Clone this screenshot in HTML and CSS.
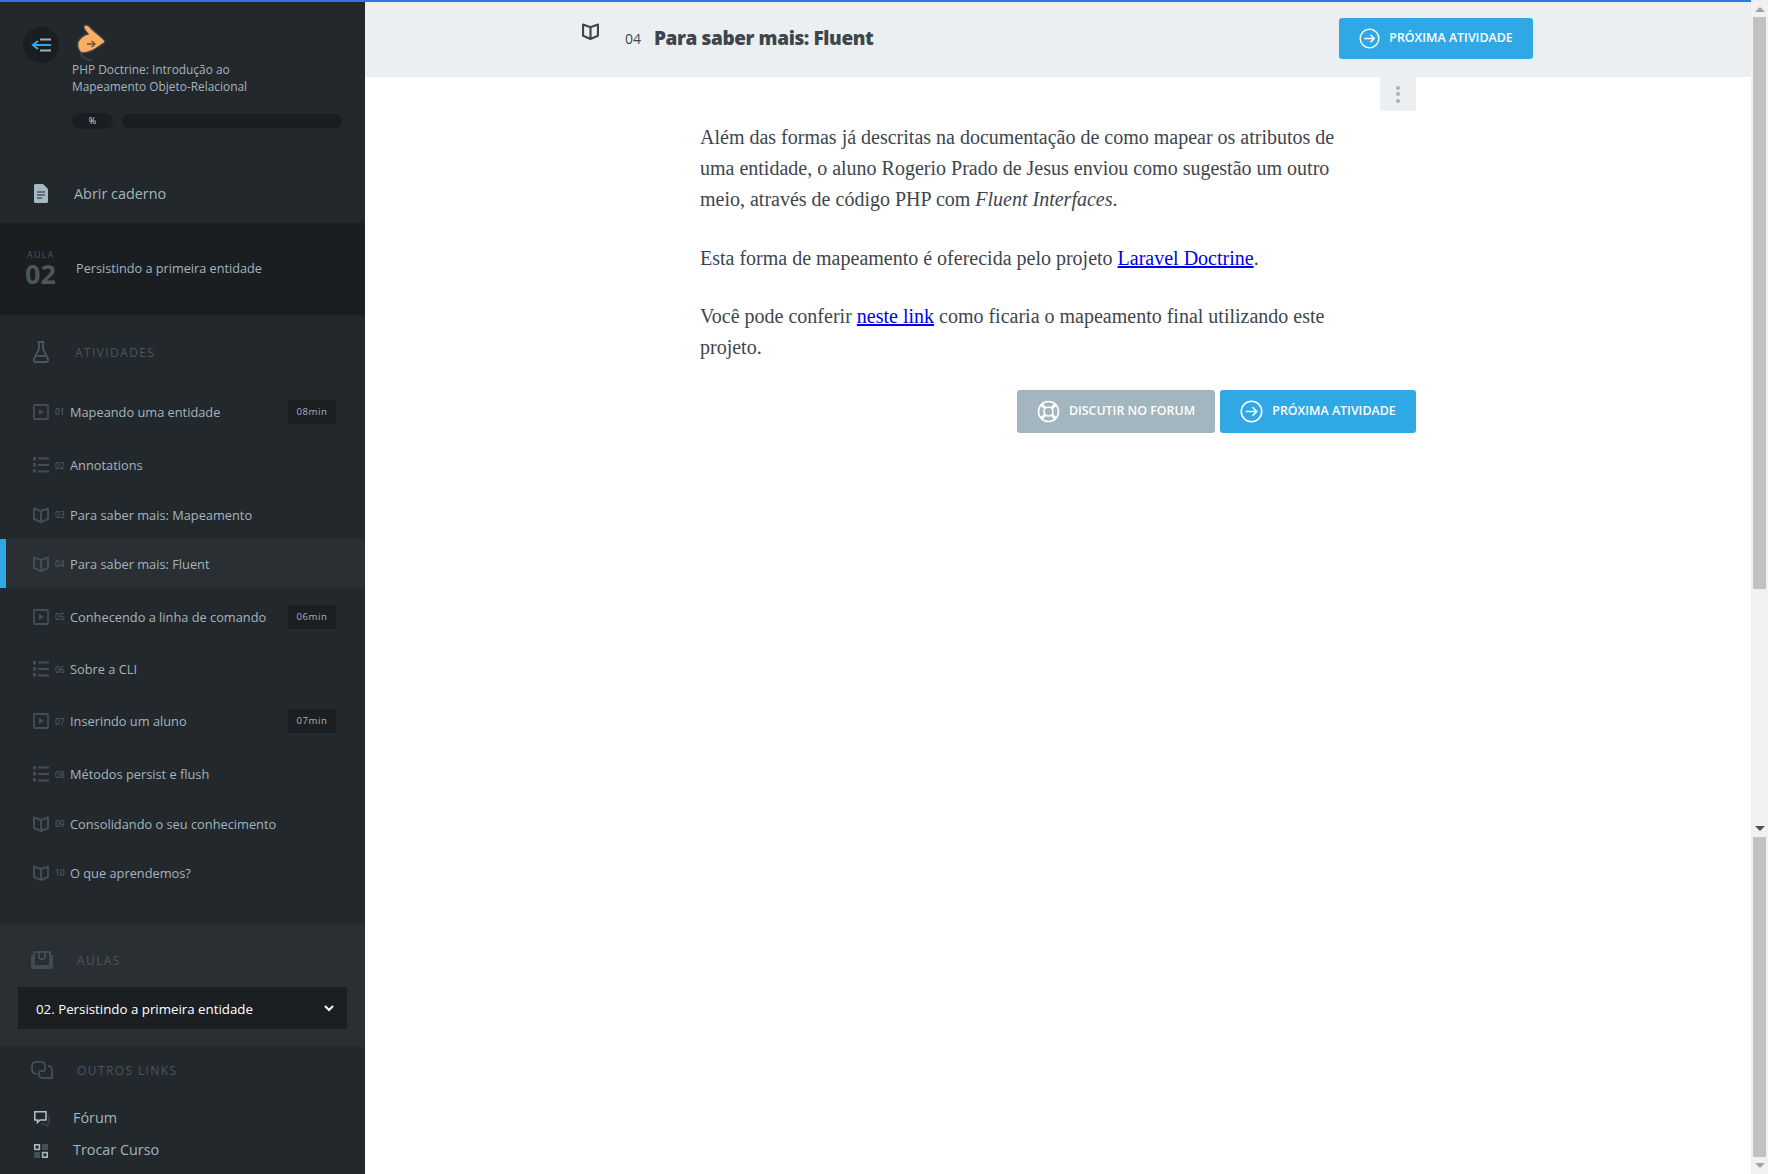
FILE: index.html
```html
<!DOCTYPE html>
<html lang="pt-BR">
<head>
    <meta charset="UTF-8">
    <title>Para saber mais: Fluent | PHP Doctrine</title>
    <link rel="stylesheet" href="styles.css">
</head>
<body>
    <svg class="icon-defs" width="0" height="0">
        <symbol id="i-book" viewBox="0 0 16 16">
            <path d="M1 1.5 L8 4 L15 1.5 V12 L8 15 L1 12 Z M8 4 V15" fill="none" stroke="currentColor" stroke-width="2" stroke-linejoin="round"/>
        </symbol>
        <symbol id="i-play" viewBox="0 0 16 16">
            <rect x="1" y="1" width="14" height="14" rx="1" fill="none" stroke="currentColor" stroke-width="1.8"/>
            <path d="M6 5 L11 8 L6 11 Z" fill="currentColor"/>
        </symbol>
        <symbol id="i-list" viewBox="0 0 16 16">
            <path d="M0 0 H3 V3.5 H0 Z M0 6 H3 V9.5 H0 Z M0 12 H3 V15.5 H0 Z" fill="currentColor"/>
            <path d="M5 1.5 H16 M5 8 H16 M5 14.5 H16" stroke="currentColor" stroke-width="2"/>
        </symbol>
        <symbol id="i-next" viewBox="0 0 22 22">
            <circle cx="11" cy="11" r="9.8" fill="none" stroke="currentColor" stroke-width="1.5"/>
            <path d="M5.5 11 H16 M12 7 L16 11 L12 15" fill="none" stroke="currentColor" stroke-width="1.5"/>
        </symbol>
    </svg>

    <div class="page">
        <div class="top-line"></div>
        <div class="layout">
            <aside class="sidebar">
                <div class="course">
                    <div class="back">
                        <svg width="20" height="14" viewBox="0 0 20 14">
                            <path d="M9 1.5 H20 M9 12.5 H20" stroke="#a5adb2" stroke-width="2"/>
                            <path d="M20 7 H3 M7 3 L2 7 L7 11" fill="none" stroke="#2fa8e6" stroke-width="2.2"/>
                        </svg>
                    </div>
                    <div class="course-info">
                        <svg class="course-logo" width="30" height="37" viewBox="0 0 30 37">
                            <path d="M3 29 C6 34 10 36 15 36" fill="none" stroke="#3a4045" stroke-width="1.6"/>
                            <path d="M7 2 C9 0 11 1 13 3 C17 8 24 12 28 17 C28 19 26 20 24 21 C18 25 13 29 5 29 C2 28 0 23 1 18 C3 14 7 11 11 10 C9 7 6 5 7 2 Z" fill="#fbae62" stroke="#3f454a" stroke-width="1.4"/>
                            <path d="M10 20 H18 M14.5 17 L18 20 L14.5 23" fill="none" stroke="#6a5640" stroke-width="1.5"/>
                        </svg>
                        <p class="course-name">PHP Doctrine: Introdução ao Mapeamento Objeto-Relacional</p>
                        <div class="progress">
                            <span class="progress-label">%</span>
                            <span class="progress-bar"></span>
                        </div>
                    </div>
                </div>

                <a class="notebook" href="#">
                    <svg width="14" height="19" viewBox="0 0 14 19">
                        <path d="M1 0 H9 L14 5 V18 L13 19 H1 L0 18 V1 Z" fill="#a6b8c1"/>
                        <path d="M3 8 H11 M3 11 H11 M3 14 H8" stroke="#23282c" stroke-width="1.1"/>
                    </svg>
                    <span>Abrir caderno</span>
                </a>

                <div class="lesson">
                    <div class="lesson-number">
                        <span class="lesson-tag">AULA</span>
                        <strong>02</strong>
                    </div>
                    <span class="lesson-name">Persistindo a primeira entidade</span>
                </div>

                <section class="activities">
                    <h3 class="side-title title-activities">
                        <svg width="16" height="22" viewBox="0 0 16 22">
                            <path d="M4.5 1 H11.5 M6 1 V8 L1 18 Q0.5 21 3 21 H13 Q15.5 21 15 18 L10 8 V1 M4 15 H12" fill="none" stroke="currentColor" stroke-width="1.9"/>
                        </svg>
                        <span>ATIVIDADES</span>
                    </h3>

                    <a class="task task-video" href="#">
                        <svg width="16" height="16"><use href="#i-play"/></svg>
                        <span class="task-num">01</span>
                        <span class="task-name">Mapeando uma entidade</span>
                        <span class="task-time">08min</span>
                    </a>
                    <a class="task task-list" href="#">
                        <svg width="16" height="16"><use href="#i-list"/></svg>
                        <span class="task-num">02</span>
                        <span class="task-name">Annotations</span>
                    </a>
                    <a class="task" href="#">
                        <svg width="16" height="16"><use href="#i-book"/></svg>
                        <span class="task-num">03</span>
                        <span class="task-name">Para saber mais: Mapeamento</span>
                    </a>
                    <a class="task active" href="#">
                        <svg width="16" height="16"><use href="#i-book"/></svg>
                        <span class="task-num">04</span>
                        <span class="task-name">Para saber mais: Fluent</span>
                    </a>
                    <a class="task task-video" href="#">
                        <svg width="16" height="16"><use href="#i-play"/></svg>
                        <span class="task-num">05</span>
                        <span class="task-name">Conhecendo a linha de comando</span>
                        <span class="task-time">06min</span>
                    </a>
                    <a class="task task-list tight" href="#">
                        <svg width="16" height="16"><use href="#i-list"/></svg>
                        <span class="task-num">06</span>
                        <span class="task-name">Sobre a CLI</span>
                    </a>
                    <a class="task task-video tight" href="#">
                        <svg width="16" height="16"><use href="#i-play"/></svg>
                        <span class="task-num">07</span>
                        <span class="task-name">Inserindo um aluno</span>
                        <span class="task-time">07min</span>
                    </a>
                    <a class="task task-list" href="#">
                        <svg width="16" height="16"><use href="#i-list"/></svg>
                        <span class="task-num">08</span>
                        <span class="task-name">Métodos persist e flush</span>
                    </a>
                    <a class="task" href="#">
                        <svg width="16" height="16"><use href="#i-book"/></svg>
                        <span class="task-num">09</span>
                        <span class="task-name">Consolidando o seu conhecimento</span>
                    </a>
                    <a class="task" href="#">
                        <svg width="16" height="16"><use href="#i-book"/></svg>
                        <span class="task-num">10</span>
                        <span class="task-name">O que aprendemos?</span>
                    </a>
                </section>

                <section class="lessons">
                    <h3 class="side-title">
                        <svg width="22" height="18" viewBox="0 0 22 18">
                            <path d="M3 1 H19 V15 H12 L11 16 L10 15 H3 Z M8 1 V7 Q11 10 14 7 V1 M1 4 V17 H21 V4" fill="none" stroke="currentColor" stroke-width="1.5"/>
                        </svg>
                        <span>AULAS</span>
                    </h3>
                    <div class="lesson-select">
                        <span>02. Persistindo a primeira entidade</span>
                        <svg width="10" height="7" viewBox="0 0 10 7">
                            <path d="M1 1 L5 5 L9 1" fill="none" stroke="#fff" stroke-width="2"/>
                        </svg>
                    </div>
                </section>

                <section class="links">
                    <h3 class="side-title">
                        <svg width="22" height="18" viewBox="0 0 22 18">
                            <path d="M6 13 Q1 13 1 8 V5 Q1 1 5 1 H10 Q14 1 14 5 V8 Q14 10 12 10 H10 Q8 10 8 12 V13 Q8 17 12 17 H21 V10 Q21 5 17 5" fill="none" stroke="currentColor" stroke-width="1.6"/>
                        </svg>
                        <span>OUTROS LINKS</span>
                    </h3>
                    <a class="side-link link-forum" href="#">
                        <svg width="16" height="16" viewBox="0 0 16 16">
                            <path d="M5 5 H15 V13 H13 V15.5 L10.5 13 H7" fill="none" stroke="#454f56" stroke-width="1"/>
                            <path d="M0.8 0.8 H12 V9 H6 L3.5 11.5 V9 H0.8 Z" fill="#23282c" stroke="#b3c3cb" stroke-width="1.5"/>
                        </svg>
                        <span>Fórum</span>
                    </a>
                    <a class="side-link" href="#">
                        <svg width="14" height="14" viewBox="0 0 14 14">
                            <rect x="0.8" y="0.8" width="4.6" height="4.6" fill="none" stroke="#a6b8c1" stroke-width="1.6"/>
                            <rect x="8.6" y="8.6" width="4.6" height="4.6" fill="none" stroke="#a6b8c1" stroke-width="1.6"/>
                            <rect x="8" y="0" width="6" height="6" fill="#454f56"/>
                            <rect x="0" y="8" width="6" height="6" fill="#454f56"/>
                        </svg>
                        <span>Trocar Curso</span>
                    </a>
                </section>
            </aside>

            <main class="main">
                <header class="task-header">
                    <svg class="header-book" width="17" height="17"><use href="#i-book"/></svg>
                    <span class="header-num">04</span>
                    <h1>Para saber mais: Fluent</h1>
                    <a class="btn btn-blue btn-header" href="#">
                        <svg width="21" height="21"><use href="#i-next"/></svg>
                        <span>PRÓXIMA ATIVIDADE</span>
                    </a>
                </header>

                <div class="content">
                    <div class="options-row">
                        <div class="options-tab"><i></i><i></i><i></i></div>
                    </div>
                    <div class="text">
                        <p>Além das formas já descritas na documentação de como mapear os atributos de uma entidade, o aluno Rogerio Prado de Jesus enviou como sugestão um outro meio, através de código PHP com <em>Fluent Interfaces</em>.</p>
                        <p>Esta forma de mapeamento é oferecida pelo projeto <a href="#">Laravel Doctrine</a>.</p>
                        <p>Você pode conferir <a href="#">neste link</a> como ficaria o mapeamento final utilizando este projeto.</p>
                    </div>
                    <div class="actions">
                        <a class="btn btn-grey" href="#">
                            <svg width="23" height="23" viewBox="0 0 23 23">
                                <circle cx="11.5" cy="11.5" r="10" fill="none" stroke="currentColor" stroke-width="1.6"/>
                                <circle cx="11.5" cy="11.5" r="4.5" fill="none" stroke="currentColor" stroke-width="1.6"/>
                                <path d="M4.5 4.5 L8.3 8.3 M18.5 4.5 L14.7 8.3 M4.5 18.5 L8.3 14.7 M18.5 18.5 L14.7 14.7" stroke="currentColor" stroke-width="3"/>
                            </svg>
                            <span>DISCUTIR NO FORUM</span>
                        </a>
                        <a class="btn btn-blue" href="#">
                            <svg width="23" height="23"><use href="#i-next"/></svg>
                            <span>PRÓXIMA ATIVIDADE</span>
                        </a>
                    </div>
                </div>
            </main>
        </div>
    </div>

    <div class="scrollbar">
        <span class="arrow-up"></span>
        <span class="thumb thumb-top"></span>
        <span class="track-gap"></span>
        <span class="arrow-down dark"></span>
        <span class="thumb thumb-bottom"></span>
        <span class="arrow-down"></span>
    </div>
</body>
</html>
```

FILE: styles.css
```css
:root {
    --side-bg: #23282c;
    --side-dark: #1a1e21;
    --side-text: #a3b5be;
    --side-muted: #4b565d;
    --blue: #31a8e6;
}

* {
    box-sizing: border-box;
    margin: 0;
    padding: 0;
}

html, body {
    height: 100%;
    overflow: hidden;
}

body {
    display: flex;
    font-family: "Open Sans", Arial, sans-serif;
    background: #fff;
}

a {
    text-decoration: none;
}

.icon-defs {
    position: absolute;
}

.page {
    flex: 1;
    min-width: 0;
    display: flex;
    flex-direction: column;
}

.top-line {
    height: 2px;
    background: #2a7ae2;
}

.layout {
    flex: 1;
    display: flex;
    min-height: 0;
}

/* sidebar */
.sidebar {
    width: 365px;
    flex-shrink: 0;
    background: var(--side-bg);
    color: var(--side-text);
    overflow: hidden;
}

.course {
    height: 163px;
    display: flex;
    padding: 22px 23px 0 23px;
}

.back {
    width: 36px;
    height: 36px;
    margin-top: 3px;
    border-radius: 50%;
    background: var(--side-dark);
    display: flex;
    align-items: center;
    justify-content: center;
    flex-shrink: 0;
}

.course-info {
    margin-left: 13px;
    flex: 1;
}

.course-logo {
    display: block;
    margin-left: 5px;
}

.course-name {
    font-size: 11.9px;
    line-height: 17px;
    width: 200px;
}

.progress {
    display: flex;
    align-items: center;
    gap: 9px;
    margin-top: 18px;
}

.progress-label {
    width: 41px;
    height: 16px;
    border-radius: 8px;
    background: var(--side-dark);
    color: #d5dde1;
    font-size: 9px;
    line-height: 16px;
    text-align: center;
}

.progress-bar {
    width: 220px;
    height: 14px;
    border-radius: 7px;
    background: var(--side-dark);
}

.notebook {
    height: 58px;
    padding: 0 0 2px 34px;
    display: flex;
    align-items: center;
    gap: 26px;
    color: var(--side-text);
    font-size: 14.4px;
}

.lesson {
    height: 92px;
    background: var(--side-dark);
    display: flex;
    align-items: center;
    padding-left: 25px;
}

.lesson-number {
    width: 51px;
    margin-top: -2px;
    display: flex;
    flex-direction: column;
    align-items: flex-start;
    color: var(--side-muted);
}

.lesson-tag {
    font-size: 9px;
    line-height: 10px;
    letter-spacing: 1.2px;
    margin-left: 2px;
}

.lesson-number strong {
    font-size: 27px;
    line-height: 27px;
    font-weight: 700;
}

.lesson-name {
    font-size: 12.7px;
    margin-top: -2px;
}

.side-title {
    display: flex;
    align-items: center;
    font-size: 12px;
    font-weight: 400;
    letter-spacing: 1.4px;
    color: var(--side-muted);
}

.activities {
    padding-bottom: 27px;
}

.title-activities {
    height: 68px;
    padding: 6px 0 0 33px;
    gap: 26px;
}

.task {
    height: 49px;
    display: flex;
    align-items: center;
    padding: 0 29px 0 33px;
    color: var(--side-text);
    font-size: 12.8px;
}

.task svg {
    color: #434d54;
    flex-shrink: 0;
}

.task-video {
    height: 57px;
}

.task-list {
    height: 50px;
}

/* rows 06 and 07 sit a little closer in the reference */
.task-video.tight {
    height: 56px;
}

.task-list.tight {
    height: 48px;
}

.task.active {
    background: #2a2f33;
    box-shadow: inset 6px 0 0 var(--blue);
}

.task-num {
    width: 15px;
    margin: 0 0 0 6px;
    font-size: 8.5px;
    color: #5a656c;
}

.task-name {
    flex: 1;
    white-space: nowrap;
}

.task-time {
    width: 48px;
    height: 24px;
    border-radius: 2px;
    background: #1b1f22;
    color: var(--side-text);
    font-size: 9.6px;
    line-height: 24px;
    letter-spacing: 0.6px;
    text-align: center;
}

.lessons {
    height: 123px;
    background: #2a2f33;
    padding: 26px 18px 0;
}

.lessons .side-title {
    height: 20px;
    padding-left: 13px;
    gap: 24px;
}

.lesson-select {
    height: 42px;
    margin-top: 17px;
    padding: 1px 13px 0 18px;
    background: #1b1f22;
    color: #fff;
    font-size: 13.3px;
    display: flex;
    align-items: center;
    justify-content: space-between;
}

.links {
    padding: 13px 31px 0;
}

.links .side-title {
    height: 20px;
    gap: 24px;
}

.side-link {
    display: flex;
    align-items: center;
    gap: 25px;
    height: 32px;
    padding-left: 3px;
    color: var(--side-text);
    font-size: 14.4px;
}

.side-link svg {
    margin-top: 4px;
}

.link-forum {
    margin-top: 21px;
    gap: 23px;
}

/* main area */
.main {
    flex: 1;
    min-width: 0;
}

.task-header {
    height: 75px;
    background: #eceff1;
    display: flex;
    align-items: center;
    padding: 0 218px 2px 217px;
    color: #3d464d;
}

.header-book {
    margin-top: -14px;
}

.header-num {
    margin-left: 26px;
    font-size: 14px;
}

.task-header h1 {
    flex: 1;
    margin: -2px 0 0 13px;
    font-size: 19px;
    font-weight: 800;
    letter-spacing: -0.4px;
    white-space: nowrap;
}

.btn {
    display: flex;
    align-items: center;
    justify-content: center;
    gap: 9px;
    height: 43px;
    border-radius: 3px;
    color: #fff;
    font-size: 12.4px;
    font-weight: 600;
}

.btn span {
    margin-top: -2px;
}

.btn-blue {
    background: var(--blue);
    width: 196px;
}

.btn-grey {
    background: #a3b5be;
    width: 198px;
}

.btn-header {
    width: 194px;
    height: 41px;
}

.content {
    width: 716px;
    margin-left: 335px;
}

.options-row {
    display: flex;
    justify-content: flex-end;
    height: 34px;
}

.options-tab {
    width: 36px;
    background: #eceff1;
    border-radius: 0 0 3px 3px;
    display: flex;
    flex-direction: column;
    align-items: center;
    justify-content: center;
    gap: 2.5px;
}

.options-tab i {
    width: 4px;
    height: 4px;
    border-radius: 50%;
    background: #a3b5be;
}

.text {
    width: 640px;
    margin-top: 11px;
    font-family: "Liberation Serif", "Times New Roman", serif;
    font-size: 20px;
    line-height: 31px;
    color: #3d464d;
}

.text p {
    margin-bottom: 27.5px;
}

.text a {
    color: #0000ee;
    text-decoration: underline;
}

.actions {
    display: flex;
    justify-content: flex-end;
    gap: 5px;
    margin-top: -0.5px;
}

/* fake browser scrollbar */
.scrollbar {
    width: 17px;
    flex-shrink: 0;
    height: 100%;
    background: #f1f1f1;
    display: flex;
    flex-direction: column;
    align-items: center;
}

.thumb {
    width: 13px;
    background: #c1c1c1;
}

.thumb-top {
    height: 572px;
    margin-top: 5px;
}

.track-gap {
    height: 237px;
}

.thumb-bottom {
    height: 320px;
    margin-top: 6px;
}

.arrow-up, .arrow-down {
    width: 0;
    height: 0;
    border-left: 5px solid transparent;
    border-right: 5px solid transparent;
}

.arrow-up {
    margin-top: 7px;
    border-bottom: 5px solid #a3a3a3;
}

.arrow-down {
    border-top: 5px solid #a3a3a3;
}

.arrow-down:last-child {
    margin-top: 6px;
}

.arrow-down.dark {
    border-top-color: #505050;
}
```
